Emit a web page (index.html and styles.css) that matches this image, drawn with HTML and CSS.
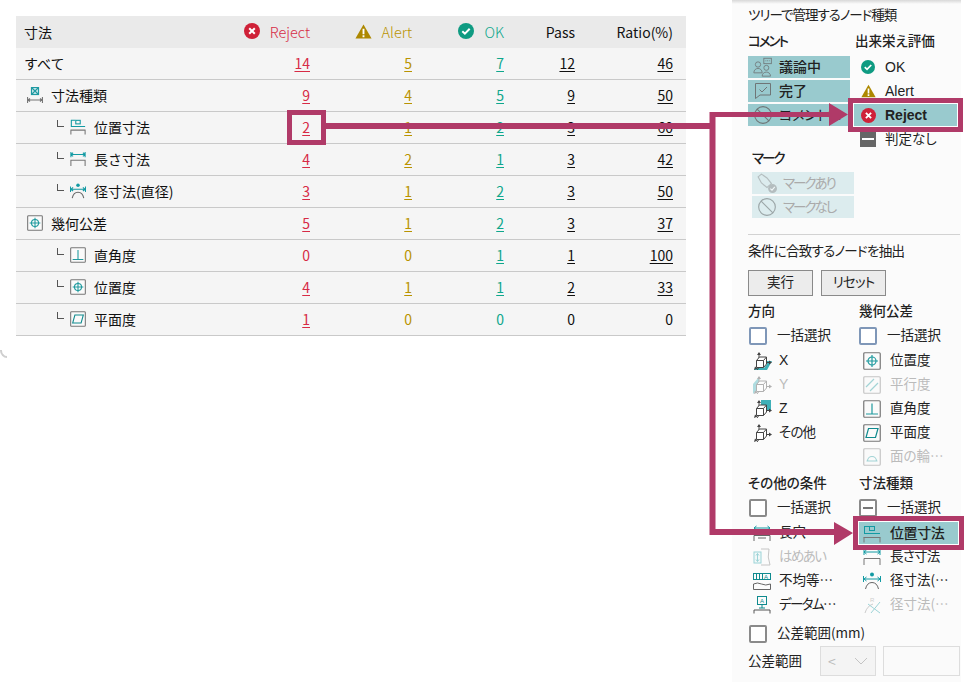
FILE: index.html
```html
<!DOCTYPE html>
<html lang="ja">
<head>
<meta charset="utf-8">
<title>寸法</title>
<link rel="stylesheet" href="styles.css">
</head>
<body>
<svg class="defs" width="0" height="0">
  <symbol id="ok" viewBox="0 0 16 16"><circle cx="8" cy="8" r="8" fill="#0f9b82"/><path d="M4.300 8.200l2.600 2.500 4.800-5" fill="none" stroke="#fff" stroke-width="2"/></symbol>
  <symbol id="alert" viewBox="0 0 18 16"><path d="M9 0.500L17.600 15.500H0.400Z" fill="#ad8800"/><path d="M8 5h2v6H8zM8 12h2v2H8z" fill="#fff"/></symbol>
  <symbol id="reject" viewBox="0 0 16 16"><circle cx="8" cy="8" r="8" fill="#cf2138"/><path d="M5.200 5.200l5.600 5.600M10.800 5.200l-5.600 5.600" fill="none" stroke="#fff" stroke-width="2"/></symbol>
  <symbol id="dimall" viewBox="0 0 16 16"><rect x="4.500" y=".5" width="7" height="7" fill="#d4ecee" stroke="#1f9aa2"/><path d="M5 1l6 6M11 1l-6 6" stroke="#1f9aa2" fill="none"/><path d="M.5 10v6M15.500 10v6M1 13h14M3 11.500L1 13l2 1.500M13 11.500l2 1.500-2 1.500" stroke="#777" fill="none"/></symbol>
  <symbol id="dimpos" viewBox="0 0 18 18"><path d="M1.500 1v8M1 1.500h5M1 8.500h16" stroke="#139aa3" fill="none"/><rect x="6.500" y="1.500" width="5" height="4" fill="none" stroke="#139aa3"/><path d="M.5 12.500h17M1 12.500v5M17 12.500v5" stroke="#777" fill="none"/></symbol>
  <symbol id="dimlen" viewBox="0 0 18 18"><path d="M1 1v6M17 1v6M1 4h16M3.500 2l-2.500 2 2.500 2M14.500 2l2.500 2-2.500 2" stroke="#139aa3" fill="none"/><path d="M1 17v-6.500h16V17" stroke="#777" fill="none"/></symbol>
  <symbol id="dimrad" viewBox="0 0 18 18"><circle cx="9" cy="2.500" r="2" fill="#139aa3"/><path d="M.5 4v6M17.500 4v6M1 7h16M3.500 5l-2.500 2 2.500 2M14.500 5l2.500 2-2.500 2" stroke="#139aa3" fill="none"/><path d="M2.500 17Q4 10.500 9 10.500T15.500 17" stroke="#666" fill="none"/></symbol>
  <symbol id="geopos" viewBox="0 0 18 18"><rect x=".75" y=".75" width="16.500" height="16.500" rx="1" fill="#fafafa" stroke="#777" stroke-width="1.200"/><circle cx="9" cy="9" r="4" fill="none" stroke="#1f9a9e" stroke-width="1.200"/><path d="M9 3v12M3 9h12" stroke="#1f9a9e" stroke-width="1.200"/></symbol>
  <symbol id="geopar" viewBox="0 0 18 18"><rect x=".75" y=".75" width="16.500" height="16.500" rx="1" fill="#fafafa" stroke="#777" stroke-width="1.200"/><path d="M3 11l8-8M7 15l8-8" stroke="#1f9a9e" stroke-width="1.200"/></symbol>
  <symbol id="geoperp" viewBox="0 0 18 18"><rect x=".75" y=".75" width="16.500" height="16.500" rx="1" fill="#fafafa" stroke="#777" stroke-width="1.200"/><path d="M9 3.500V14M3 14h12" stroke="#1f9a9e" stroke-width="1.200" fill="none"/></symbol>
  <symbol id="geoflat" viewBox="0 0 18 18"><rect x=".75" y=".75" width="16.500" height="16.500" rx="1" fill="#fafafa" stroke="#777" stroke-width="1.200"/><path d="M5.500 4.500h9.500L12.500 13.500H3Z" stroke="#0f8a8e" stroke-width="1.200" fill="none"/></symbol>
  <symbol id="geoprof" viewBox="0 0 18 18"><rect x=".75" y=".75" width="16.500" height="16.500" rx="1" fill="#fafafa" stroke="#777" stroke-width="1.200"/><path d="M3.500 13h11M4.500 13a4.500 4.500 0 0 1 9 0" stroke="#1f9a9e" stroke-width="1.200" fill="none"/></symbol>
  <symbol id="axes" viewBox="0 0 19 18"><path d="M6 8V1M4 18l3-4M11 10.500h7" stroke="#444" fill="none"/><path d="M6 0l-2 3h4ZM1 18l1-3.500 2.500 2ZM19 10.500l-3-2v4Z" fill="#444"/><path d="M3.500 8.500l3-3.500h7v7l-3 3.500h-7ZM3.500 8.500h7v7M10.500 8.500l3-3.500" stroke="#444" fill="#fff"/></symbol>
  <symbol id="people" viewBox="0 0 24 24"><circle cx="6" cy="9" r="3.200" fill="none" stroke="#6f7677"/><path d="M1 19c0-7 10-7 10 0Z" fill="none" stroke="#6f7677"/><rect x="13" y="1.500" width="9" height="6.500" fill="none" stroke="#6f7677"/><path d="M15 4.500h1M17 4.500h1M19 4.500h1" stroke="#6f7677"/><circle cx="16" cy="13" r="3" fill="none" stroke="#6f7677"/><path d="M11 23c0-6.500 10-6.500 10 0Z" fill="none" stroke="#6f7677"/></symbol>
  <symbol id="balloon" viewBox="0 0 20 20"><path d="M2.500 2.500h15v11.500H7l-4.500 3.500Z" fill="none" stroke="#6f7677"/><path d="M6.500 8.500l2.500 2.500 5-5" fill="none" stroke="#6f7677"/></symbol>
  <symbol id="nope" viewBox="0 0 18 18"><circle cx="9" cy="9" r="7.500" fill="none" stroke="#6f7677"/><path d="M3.700 3.700l10.600 10.600" stroke="#6f7677"/></symbol>
  <symbol id="tag" viewBox="0 0 18 18"><path d="M1 3.500L4 1l5 3.500 4 5-4 3.500-5-4Z" fill="none" stroke="#9a9fa0"/><circle cx="14" cy="14" r="4" fill="#9a9fa0"/><path d="M12 14l1.500 1.500 2.500-3" stroke="#fff" fill="none"/></symbol>
  <symbol id="tol" viewBox="0 0 18 18"><path d="M1 4h16M3.500 2l-2.500 2 2.500 2M14.500 2l2.500 2-2.500 2" stroke="#139aa3" fill="none"/><path d="M1 17v-5.500h16V17M5 14h8" stroke="#666" fill="none"/></symbol>
  <symbol id="fit" viewBox="0 0 18 18"><rect x="1" y="4" width="7" height="11" fill="#e6f5f5" stroke="#139aa3"/><path d="M4.500 5.500v8M3 7.500l1.500-2 1.500 2M3 11.500l1.500 2 1.500-2" stroke="#139aa3" fill="none"/><path d="M8 1h8q-2 8 1 16H8" stroke="#777" fill="none"/></symbol>
</svg>

<div class="page">
  <main class="main">
    <table class="grid">
      <thead>
        <tr>
          <th class="name">寸法</th>
          <th class="num reject"><span class="headcell"><svg class="i16"><use href="#reject"/></svg><span class="hlabel">Reject</span></span></th>
          <th class="num alert"><span class="headcell"><svg class="i17"><use href="#alert"/></svg><span class="hlabel">Alert</span></span></th>
          <th class="num ok"><span class="headcell"><svg class="i16"><use href="#ok"/></svg><span class="hlabel">OK</span></span></th>
          <th class="num">Pass</th>
          <th class="num">Ratio(%)</th>
        </tr>
      </thead>
      <tbody>
        <tr><td class="name">すべて</td><td class="num reject"><a>14</a></td><td class="num alert"><a>5</a></td><td class="num ok"><a>7</a></td><td class="num"><a>12</a></td><td class="num"><a>46</a></td></tr>
        <tr><td class="name"><span class="lab l1"><svg class="i16"><use href="#dimall"/></svg>寸法種類</span></td><td class="num reject"><a>9</a></td><td class="num alert"><a>4</a></td><td class="num ok"><a>5</a></td><td class="num"><a>9</a></td><td class="num"><a>50</a></td></tr>
        <tr><td class="name"><span class="lab l2"><svg class="i16"><use href="#dimpos"/></svg>位置寸法</span></td><td class="num reject"><a>2</a></td><td class="num alert"><a>1</a></td><td class="num ok"><a>2</a></td><td class="num"><a>3</a></td><td class="num"><a>60</a></td></tr>
        <tr><td class="name"><span class="lab l2"><svg class="i16"><use href="#dimlen"/></svg>長さ寸法</span></td><td class="num reject"><a>4</a></td><td class="num alert"><a>2</a></td><td class="num ok"><a>1</a></td><td class="num"><a>3</a></td><td class="num"><a>42</a></td></tr>
        <tr><td class="name"><span class="lab l2"><svg class="i16"><use href="#dimrad"/></svg>径寸法(直径)</span></td><td class="num reject"><a>3</a></td><td class="num alert"><a>1</a></td><td class="num ok"><a>2</a></td><td class="num"><a>3</a></td><td class="num"><a>50</a></td></tr>
        <tr><td class="name"><span class="lab l1"><svg class="i16"><use href="#geopos"/></svg>幾何公差</span></td><td class="num reject"><a>5</a></td><td class="num alert"><a>1</a></td><td class="num ok"><a>2</a></td><td class="num"><a>3</a></td><td class="num"><a>37</a></td></tr>
        <tr><td class="name"><span class="lab l2"><svg class="i16"><use href="#geoperp"/></svg>直角度</span></td><td class="num reject">0</td><td class="num alert">0</td><td class="num ok"><a>1</a></td><td class="num"><a>1</a></td><td class="num"><a>100</a></td></tr>
        <tr><td class="name"><span class="lab l2"><svg class="i16"><use href="#geopos"/></svg>位置度</span></td><td class="num reject"><a>4</a></td><td class="num alert"><a>1</a></td><td class="num ok"><a>1</a></td><td class="num"><a>2</a></td><td class="num"><a>33</a></td></tr>
        <tr><td class="name"><span class="lab l2"><svg class="i16"><use href="#geoflat"/></svg>平面度</span></td><td class="num reject"><a>1</a></td><td class="num alert">0</td><td class="num ok">0</td><td class="num">0</td><td class="num">0</td></tr>
      </tbody>
    </table>
    <div class="corner"></div>
  </main>

  <aside class="panel">
    <div class="title first">ツリーで管理するノード種類</div>
    <div class="split">
      <section>
        <div class="head up"><span class="tight2">コメント</span></div>
        <div class="btns">
          <div class="tbtn"><svg class="i20"><use href="#people"/></svg><b>議論中</b></div>
          <div class="tbtn"><svg class="i20"><use href="#balloon"/></svg><b>完了</b></div>
          <div class="tbtn"><svg class="i20"><use href="#nope"/></svg><span>コメントな</span></div>
        </div>
      </section>
      <section>
        <div class="head up">出来栄え評価</div>
        <div class="evals">
          <div class="eval"><svg class="i14"><use href="#ok"/></svg><span class="latin">OK</span></div>
          <div class="eval"><svg class="i15"><use href="#alert"/></svg><span class="latin">Alert</span></div>
          <div class="eval sel"><svg class="i15r"><use href="#reject"/></svg><span class="latin strong">Reject</span></div>
          <div class="eval"><span class="minus"></span><span>判定なし</span></div>
        </div>
      </section>
    </div>
    <section class="marks">
      <div class="head tight"><span class="tight2">マーク</span></div>
      <div class="btns mbtns">
        <div class="tbtn off"><svg class="i20"><use href="#tag"/></svg><span class="tight2">マークあり</span></div>
        <div class="tbtn off"><svg class="i20"><use href="#nope"/></svg><span class="tight2">マークなし</span></div>
      </div>
    </section>
    <hr class="rule">
    <div class="title second">条件に合致するノードを抽出</div>
    <div class="actions"><button class="btn">実行</button><button class="btn"><span class="tight1">リセット</span></button></div>
    <div class="filters">
      <section>
        <div class="head up">方向</div>
        <div class="check"><span class="box blue"></span>一括選択</div>
        <div class="row">
          <svg class="i19" viewBox="0 0 19 18"><path d="M2 16h9l3-4V9h5l-5 9H1Z" fill="#3fb0b8"/><use href="#axes" width="19" height="18"/></svg>
          <span class="latin">X</span></div>
        <div class="row off">
          <svg class="i19" viewBox="0 0 19 18"><path d="M0 8l6-7v11l-6 6Z" fill="#3fb0b8"/><use href="#axes" width="19" height="18"/></svg>
          <span class="latin">Y</span></div>
        <div class="row">
          <svg class="i19" viewBox="0 0 19 18"><path d="M8 0h10v10H8Z" fill="#3fb0b8"/><use href="#axes" width="19" height="18"/></svg>
          <span class="latin">Z</span></div>
        <div class="row"><svg class="i19"><use href="#axes"/></svg><span class="tight1">その他</span></div>
      </section>
      <section class="rcol">
        <div class="head up">幾何公差</div>
        <div class="check"><span class="box blue"></span>一括選択</div>
        <div class="row"><svg class="i18"><use href="#geopos"/></svg>位置度</div>
        <div class="row off"><svg class="i18"><use href="#geopar"/></svg>平行度</div>
        <div class="row"><svg class="i18"><use href="#geoperp"/></svg>直角度</div>
        <div class="row"><svg class="i18"><use href="#geoflat"/></svg>平面度</div>
        <div class="row off"><svg class="i18"><use href="#geoprof"/></svg>面の輪…</div>
      </section>
    </div>
    <div class="filters lower">
      <section>
        <div class="head">その他の条件</div>
        <div class="check"><span class="box"></span>一括選択</div>
        <div class="row"><svg class="i18"><use href="#tol"/></svg>長穴</div>
        <div class="row off"><svg class="i18"><use href="#fit"/></svg><span class="tight15">はめあい</span></div>
        <div class="row">
          <svg class="i18" viewBox="0 0 18 18"><rect x=".5" y="1.500" width="17" height="6" fill="none" stroke="#0f8a8e"/><path d="M3.500 2v5M6.500 2v5M9.500 2v5" stroke="#0f8a8e"/><text class="micro" x="11" y="7">A</text><path d="M.5 17.500V12q4-2 8 0t9 0v5.500Z" fill="none" stroke="#666"/></svg>
          不均等…</div>
        <div class="row">
          <svg class="i18" viewBox="0 0 18 18"><rect x="4.500" y=".5" width="9" height="8" fill="none" stroke="#0f8a8e"/><text class="micro" x="7" y="7">A</text><path d="M9 8.500V12M6 12h6" stroke="#0f8a8e" fill="none"/><path d="M1 17.500v-3.500h16v3.500" stroke="#555" fill="none"/></svg>
          <span class="tight15">データム…</span></div>
      </section>
      <section class="rcol">
        <div class="head">寸法種類</div>
        <div class="check"><span class="box mixed"></span>一括選択</div>
        <div class="row sel2"><svg class="i18"><use href="#dimpos"/></svg><b>位置寸法</b></div>
        <div class="row"><svg class="i18"><use href="#dimlen"/></svg><span class="tight1">長さ寸法</span></div>
        <div class="row"><svg class="i18"><use href="#dimrad"/></svg>径寸法(…</div>
        <div class="row off">
          <svg class="i18" viewBox="0 0 18 18"><path d="M2 17Q4 10 10 8" stroke="#888" fill="none"/><path d="M8 17L17 6M5 8l12 9" stroke="#139aa3" fill="none"/><text class="micro gray" x="7" y="6">R</text></svg>
          径寸法(…</div>
      </section>
    </div>
    <div class="check tolcheck"><span class="box"></span>公差範囲(mm)</div>
    <div class="tolrow"><span class="tollabel">公差範囲</span><span class="select"><span>&lt;</span><svg class="chev" viewBox="0 0 14 8"><path d="M1 1l6 6 6-6" fill="none" stroke="#c4c4c4"/></svg></span><span class="input"></span></div>
  </aside>
</div>

<svg class="callouts" width="964" height="682" viewBox="0 0 964 682">
  <rect x="289.500" y="112.500" width="34" height="30" fill="none" stroke="#b03a68" stroke-width="5"/>
  <rect x="850.500" y="100.500" width="110" height="29" fill="none" stroke="#b03a68" stroke-width="5"/>
  <rect x="855.500" y="518.500" width="106" height="29" fill="none" stroke="#b03a68" stroke-width="5"/>
  <path d="M326 126H712M712.500 112V535M710 532H836" fill="none" stroke="#b03a68" stroke-width="6"/>
  <path d="M710 114.500H831" fill="none" stroke="#b03a68" stroke-width="5"/>
  <path d="M829 103L848 114.500L829 126ZM834 522L853 533L834 545Z" fill="#b03a68"/>
</svg>
</body>
</html>
```
FILE: styles.css
```css
* { box-sizing: border-box; }
html, body { margin: 0; padding: 0; }
body {
  width: 964px;
  height: 682px;
  overflow: hidden;
  background: #fff;
  color: #111;
  font-family: "Noto Sans CJK JP", "Noto Sans", sans-serif;
  font-size: 14px;
  position: relative;
}
.defs { position: absolute; }
.page { display: flex; height: 682px; }
.main { width: 732px; padding: 16px 0 0 16px; position: relative; }

.grid { width: 670px; border-collapse: separate; border-spacing: 0; table-layout: fixed; background: #f5f5f5; }
.grid th { height: 32px; background: #eaeaea; font-weight: 400; padding: 0; }
.grid td { height: 32px; border-bottom: 1px solid #c9c9c9; padding: 0 0 2px; }
.grid .name { width: 190px; text-align: left; padding-left: 8px; }
.grid .num { text-align: right; padding-right: 13px; }
.grid th:nth-child(2) { width: 117px; }
.grid th:nth-child(3) { width: 102px; }
.grid th:nth-child(4) { width: 92px; }
.grid th:nth-child(5) { width: 71px; }
a { text-decoration: underline; text-underline-offset: 2px; }
.reject { color: #d72b45; }
.alert { color: #b99300; }
.ok { color: #0fa78c; }
.headcell { display: inline-flex; align-items: center; gap: 10px; }
.hlabel { font-size: 14.5px; font-weight: 300; }
.lab { display: flex; align-items: center; gap: 8px; position: relative; line-height: 20px; }
.lab svg { stroke-width: 1.2; }
.lab.l1 { padding-left: 3px; }
.lab.l2 { padding-left: 46px; }
.lab.l2::before {
  content: "";
  position: absolute;
  left: 33px;
  top: 3px;
  width: 6px;
  height: 6px;
  border-left: 1px solid #555;
  border-bottom: 1px solid #555;
}
.corner {
  position: absolute;
  left: 0;
  top: 343px;
  width: 14px;
  height: 15px;
  border-radius: 50%;
  border: 2px solid transparent;
  border-left-color: #cfcfcf;
  border-bottom-color: #cfcfcf;
  clip-path: inset(7px 7px 0 0);
}

svg { display: block; flex: none; }
.i14 { width: 14px; height: 14px; }
.i15 { width: 15px; height: 14px; }
.i15r { width: 15px; height: 15px; }
.i16 { width: 16px; height: 16px; }
.i17 { width: 17px; height: 15px; }
.i18 { width: 18px; height: 18px; }
.i19 { width: 19px; height: 18px; }
.i20 { width: 20px; height: 20px; }
.micro { font-family: "Liberation Sans", sans-serif; font-size: 6px; fill: #0f8a8e; }
.micro.gray { fill: #888; }

.panel {
  width: 229px;
  height: 682px;
  padding: 5px 0 0 16px;
  background: linear-gradient(#d8d8d8 0, #fbfbfb 4px);
  font-size: 13.5px;
  font-feature-settings: "palt";
  color: #222;
  line-height: 20px;
}
.tight1 { letter-spacing: -.8px; }
.tight15 { letter-spacing: -1.6px; }
.tight2 { letter-spacing: -2px; }
.title { height: 20px; line-height: 18px; white-space: nowrap; }
.title.first { letter-spacing: -1px; }
.title.second { letter-spacing: -.7px; margin-top: 6px; }
.head { height: 20px; font-weight: 500; }
.head.up { line-height: 18px; }
.split { display: grid; grid-template-columns: 107px 100px; margin-top: 6px; }
.btns { display: flex; flex-direction: column; gap: 2px; margin-top: 5px; width: 102px; }
.tbtn { height: 22px; background: #99cace; display: flex; align-items: center; padding: 0 0 3px 5px; gap: 6px; white-space: nowrap; overflow: hidden; font-size: 14px; }
.tbtn svg { margin-top: 3px; }
.tbtn b { font-weight: 500; }
.tbtn.off { background: #dcecee; color: #aaa; font-size: 13.5px; }
.tbtn.off svg { opacity: .6; }
.evals { margin-top: 4px; }
.eval { height: 24px; display: flex; align-items: center; padding-left: 6px; gap: 10px; }
.eval svg.i15 { margin-right: -1px; }
.latin { font-family: "Liberation Sans", sans-serif; font-size: 14px; }
.strong { font-weight: 700; }
.eval.sel { margin-left: -2px; width: 105px; padding-left: 8px; gap: 9px; background: #99cace; box-shadow: inset 0 0 0 1px #fff; }
.minus { width: 16px; height: 15px; background: #666; position: relative; margin: 2px -1px 0 -1px; }
.minus::after { content: ""; position: absolute; left: 2px; right: 2px; top: 6px; height: 2px; background: #fff; }
.eval:last-child { padding-bottom: 2px; }
.marks { padding-left: 4px; }
.head.tight { height: 14px; line-height: 12px; }
.mbtns { margin-top: 7px; }
.rule { margin: 16px 0 0; width: 212px; height: 1px; border: 0; background: #d2d2d2; }
.actions { display: flex; gap: 8px; margin-top: 9px; }
.btn { width: 65px; height: 26px; padding: 0 0 4px; border: 1px solid #8a8a8a; background: #ececec; font: inherit; font-feature-settings: "palt"; color: #222; }
.filters { display: grid; grid-template-columns: 111px 101px; margin-top: 5px; }
.filters.lower { margin-top: 4px; }
.check { height: 24px; display: flex; align-items: center; gap: 10px; margin-top: 2px; padding: 0 0 2px 1px; }
.rcol .check { padding-left: 0; }
.lower .check { margin-top: 3px; }
.box { width: 18px; height: 18px; border: 2px solid #8a8a8a; border-radius: 2px; background: #fff; position: relative; margin-top: 4px; }
.box.blue { border-color: #7f97b8; }
.box.mixed::after { content: ""; position: absolute; left: 2px; right: 2px; top: 6px; height: 2px; background: #777; }
.row { height: 24px; display: flex; align-items: center; padding: 0 0 2px 5px; gap: 7px; white-space: nowrap; }
.row svg { margin-top: 4px; }
.row svg.i18 { margin-right: 1px; }
.row .latin { margin-top: 2px; }
.rcol .row { padding-left: 4px; gap: 8px; }
.check + .row { margin-top: 1px; }
.row.off { color: #bbb; }
.row.off svg { opacity: .4; }
.rcol .check + .row.sel2 { margin: 2px 0 -1px -1px; width: 101px; padding-left: 5px; background: #99cace; box-shadow: inset 0 0 0 1px #fff; }
.sel2 b { font-weight: 500; font-size: 14px; letter-spacing: -.4px; }
.tolcheck { margin-top: 5px; }
.tolrow { display: flex; align-items: center; height: 30px; margin-top: 1px; }
.tollabel { width: 72px; padding-bottom: 2px; }
.select { width: 56px; height: 30px; border: 1px solid #ddd; background: #f4f4f4; color: #bbb; display: flex; align-items: center; justify-content: space-between; padding: 0 7px; font-size: 14px; }
.chev { width: 14px; height: 8px; }
.input { width: 77px; height: 30px; border: 1px solid #ddd; background: #fafafa; margin-left: 7px; }

.callouts { position: absolute; left: 0; top: 0; pointer-events: none; }
```
